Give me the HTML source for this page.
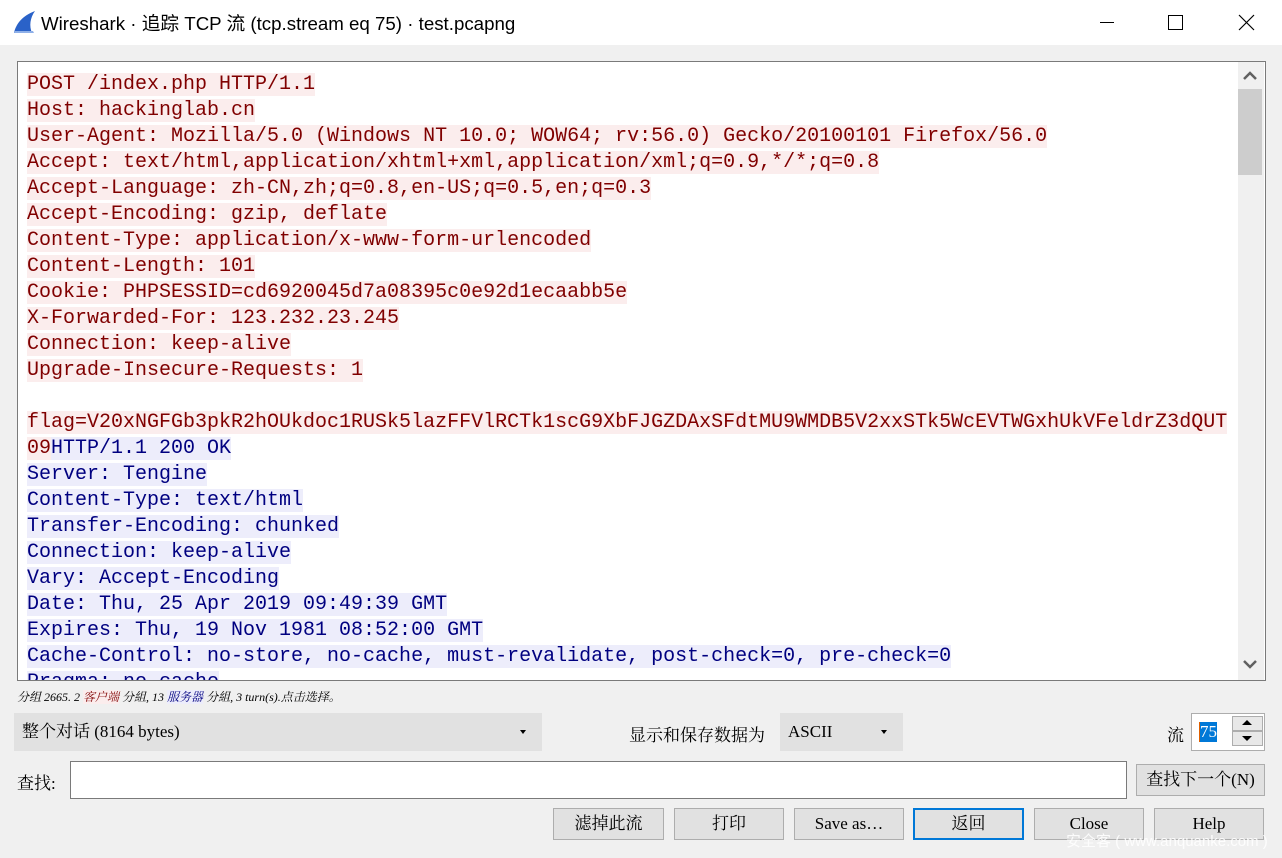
<!DOCTYPE html>
<html><head><meta charset="utf-8"><style>
*{margin:0;padding:0;box-sizing:border-box}
body{width:1282px;height:858px;background:#f0f0f0;position:relative;overflow:hidden;font-family:"Liberation Sans","Noto Sans CJK SC",sans-serif}
.abs{position:absolute}
#title{left:0;top:0;width:1282px;height:45px;background:#fff}
#title .t{left:41px;top:9px;font-size:18.7px;color:#000;white-space:nowrap}
#txt{left:17px;top:61px;width:1249px;height:620px;background:#fff;border:1px solid #7a7a7a;overflow:hidden}
.code{position:absolute;left:9px;top:10px;font-family:"Liberation Mono",monospace;font-size:20px;line-height:26px;white-space:nowrap}
.code div{height:26px}
.code span{white-space:pre}
.c{color:#800000;background:#fbeded}
.s{color:#000080;background:#ededfb}
#sb{left:1238px;top:62px;width:26px;height:618px;background:#f0f0f0}
#thumb{left:1238px;top:89px;width:24px;height:86px;background:#cdcdcd}
.serif{font-family:"Liberation Serif","Noto Serif CJK SC",serif}
.btn{position:absolute;height:32px;background:#e1e1e1;border:1px solid #adadad;font-family:"Liberation Serif","Noto Serif CJK SC",serif;font-size:17px;text-align:center;line-height:30px;color:#000}
</style></head><body>
<div id="title" class="abs">
<svg class="abs" style="left:12px;top:10px" width="24" height="24" viewBox="0 0 24 24"><path d="M2 23 C4 14 10 6 23 1 C18 8 17 16 20 23 Z" fill="#2a62c8"/><path d="M2 23 L22 23 L21 21 L3 21Z" fill="#8fb0e8"/></svg>
<div class="abs t">Wireshark · 追踪 TCP 流 (tcp.stream eq 75) · test.pcapng</div>
<div class="abs" style="left:1100px;top:22px;width:14px;height:1px;background:#000"></div>
<div class="abs" style="left:1168px;top:15px;width:15px;height:15px;border:1px solid #000"></div>
<svg class="abs" style="left:1238px;top:14px" width="17" height="17"><path d="M1 1L16 16M16 1L1 16" stroke="#000" stroke-width="1.2"/></svg>
</div>
<div id="txt" class="abs">
<div class="code"><div><span class="c">POST /index.php HTTP/1.1</span></div><div><span class="c">Host: hackinglab.cn</span></div><div><span class="c">User-Agent: Mozilla/5.0 (Windows NT 10.0; WOW64; rv:56.0) Gecko/20100101 Firefox/56.0</span></div><div><span class="c">Accept: text/html,application/xhtml+xml,application/xml;q=0.9,*/*;q=0.8</span></div><div><span class="c">Accept-Language: zh-CN,zh;q=0.8,en-US;q=0.5,en;q=0.3</span></div><div><span class="c">Accept-Encoding: gzip, deflate</span></div><div><span class="c">Content-Type: application/x-www-form-urlencoded</span></div><div><span class="c">Content-Length: 101</span></div><div><span class="c">Cookie: PHPSESSID=cd6920045d7a08395c0e92d1ecaabb5e</span></div><div><span class="c">X-Forwarded-For: 123.232.23.245</span></div><div><span class="c">Connection: keep-alive</span></div><div><span class="c">Upgrade-Insecure-Requests: 1</span></div><div></div><div><span class="c">flag=V20xNGFGb3pkR2hOUkdoc1RUSk5lazFFVlRCTk1scG9XbFJGZDAxSFdtMU9WMDB5V2xxSTk5WcEVTWGxhUkVFeldrZ3dQUT</span></div><div><span class="c">09</span><span class="s">HTTP/1.1 200 OK</span></div><div><span class="s">Server: Tengine</span></div><div><span class="s">Content-Type: text/html</span></div><div><span class="s">Transfer-Encoding: chunked</span></div><div><span class="s">Connection: keep-alive</span></div><div><span class="s">Vary: Accept-Encoding</span></div><div><span class="s">Date: Thu, 25 Apr 2019 09:49:39 GMT</span></div><div><span class="s">Expires: Thu, 19 Nov 1981 08:52:00 GMT</span></div><div><span class="s">Cache-Control: no-store, no-cache, must-revalidate, post-check=0, pre-check=0</span></div><div><span class="s">Pragma: no-cache</span></div></div>
</div>
<div id="sb" class="abs"></div>
<div id="thumb" class="abs"></div>
<svg class="abs" style="left:1243px;top:71px" width="14" height="10"><path d="M1 8L7 2L13 8" stroke="#606060" stroke-width="2.5" fill="none"/></svg>
<svg class="abs" style="left:1243px;top:659px" width="14" height="10"><path d="M1 2L7 8L13 2" stroke="#606060" stroke-width="2.5" fill="none"/></svg>

<div class="abs serif" style="left:17px;top:688px;font-size:12px;font-style:italic;white-space:nowrap;color:#000">分组 2665. 2 <span style="color:#800000;background:#fbeded">客户端</span> 分組, 13 <span style="color:#000080;background:#ededfb">服务器</span> 分組, 3 turn(s).点击选择。</div>

<div class="abs serif" style="left:14px;top:713px;width:528px;height:38px;background:#e1e1e1;font-size:17px;line-height:38px;padding-left:8px">整个对话 (8164 bytes)</div>
<div class="abs" style="left:520px;top:730px;border-left:3px solid transparent;border-right:3px solid transparent;border-top:4px solid #000"></div>
<div class="abs serif" style="left:629px;top:721px;font-size:17px">显示和保存数据为</div>
<div class="abs serif" style="left:780px;top:713px;width:123px;height:38px;background:#e1e1e1;font-size:17px;line-height:38px;padding-left:8px">ASCII</div>
<div class="abs" style="left:881px;top:730px;border-left:3px solid transparent;border-right:3px solid transparent;border-top:4px solid #000"></div>
<div class="abs serif" style="left:1167px;top:721px;font-size:17px">流</div>
<div class="abs" style="left:1191px;top:713px;width:74px;height:38px;background:#fff;border:1px solid #adadad"></div>
<div class="abs serif" style="left:1199px;top:722px;font-size:17px;background:#0078d7;color:#fff;line-height:20px;border-left:1px solid #e06000">75</div>
<div class="abs" style="left:1232px;top:716px;width:31px;height:15px;background:#e8e8e8;border:1px solid #adadad"></div>
<div class="abs" style="left:1232px;top:731px;width:31px;height:15px;background:#e8e8e8;border:1px solid #adadad"></div>
<div class="abs" style="left:1242px;top:720px;border-left:5px solid transparent;border-right:5px solid transparent;border-bottom:5px solid #000"></div>
<div class="abs" style="left:1242px;top:736px;border-left:5px solid transparent;border-right:5px solid transparent;border-top:5px solid #000"></div>

<div class="abs serif" style="left:17px;top:769px;font-size:17px">查找:</div>
<div class="abs" style="left:70px;top:761px;width:1057px;height:38px;background:#fff;border:1px solid #7a7a7a"></div>
<div class="btn" style="left:1136px;top:764px;width:129px;height:32px">查找下一个(N)</div>

<div class="btn" style="left:553px;top:808px;width:111px">滤掉此流</div>
<div class="btn" style="left:674px;top:808px;width:110px">打印</div>
<div class="btn" style="left:794px;top:808px;width:110px">Save as…</div>
<div class="btn" style="left:913px;top:808px;width:111px;border:2px solid #0078d7;line-height:28px">返回</div>
<div class="btn" style="left:1034px;top:808px;width:110px">Close</div>
<div class="btn" style="left:1154px;top:808px;width:110px">Help</div>
<div class="abs" style="left:1066px;top:830px;font-size:15px;color:#fff;white-space:nowrap;opacity:.9">安全客 ( www.anquanke.com )</div>
</body></html>
